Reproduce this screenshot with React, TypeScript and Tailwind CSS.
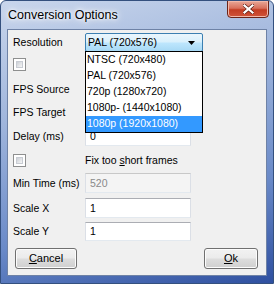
const font = "font-['Liberation_Sans',Arial,sans-serif]"

function Label({ children }: { children: React.ReactNode }) {
  return <div className="w-[72px] shrink-0 text-[10.5px] text-black leading-none">{children}</div>
}

function TextBox({ value, disabled }: { value: string; disabled?: boolean }) {
  return (
    <div
      className={`w-[106px] h-full border border-[#abadb3] border-b-[#e3e9ef] border-x-[#dbdfe6] flex items-center px-[4px] text-[10.5px] leading-none ${
        disabled ? 'bg-[#f4f4f4] text-[#8a8a8a] border-[#c8c8c8]' : 'bg-white text-black'
      }`}
    >
      {value}
    </div>
  )
}

function CheckBox() {
  return (
    <div className="w-[13px] h-[13px] border border-[#8e8f8f] bg-white p-[2px]">
      <div className="w-full h-full bg-[linear-gradient(135deg,#cbcfd5,#f6f6f6)] border border-[#c8ccd3]" />
    </div>
  )
}

function Button({ children, className }: { children: React.ReactNode; className: string }) {
  return (
    <div
      className={`h-[21px] rounded-[3px] border border-[#707070] bg-[linear-gradient(#f2f2f2_0%,#ebebeb_48%,#dddddd_52%,#cfcfcf_100%)] shadow-[inset_0_0_0_1px_#fcfcfc] flex items-center justify-center text-[11px] text-black ${className}`}
    >
      {children}
    </div>
  )
}

const options = ['NTSC (720x480)', 'PAL (720x576)', '720p (1280x720)', '1080p- (1440x1080)', '1080p (1920x1080)']

export default function App() {
  return (
    <div className={`w-[274px] h-[284px] ${font} bg-[linear-gradient(165deg,#c9d6ec_0%,#9fb5dc_35%,#6a8ac8_70%,#2f50a0_100%)] border border-[#34507e] rounded-t-[6px] flex flex-col overflow-hidden`}>
      {/* title bar */}
      <div className="relative h-[28px] shrink-0 flex items-center px-[7px]">
        <span className="text-[12.5px] text-black [text-shadow:0_0_6px_#fff,0_0_10px_#fff,0_0_3px_#fff]">Conversion Options</span>
        <div className="absolute right-[4px] top-[-1px] w-[42px] h-[18px] rounded-b-[4px] border border-[#6b2418] bg-[linear-gradient(#e8a898_0%,#d8705c_45%,#c33c22_55%,#d0543a_100%)] flex items-center justify-center shadow-[inset_0_0_0_1px_#f2b7a8]">
          <svg width="11" height="10" viewBox="0 0 11 10">
            <path d="M1.5 1.5 L9.5 8.5 M9.5 1.5 L1.5 8.5" stroke="#5a1a10" strokeWidth="3.6" strokeLinecap="square" />
            <path d="M1.5 1.5 L9.5 8.5 M9.5 1.5 L1.5 8.5" stroke="#fff" strokeWidth="2.2" strokeLinecap="square" />
          </svg>
        </div>
      </div>

      {/* client */}
      <div className="relative mx-[6px] h-[247px] bg-[#f0f0f0] border border-[#6e82a6] flex flex-col pl-[5px]">
        <div className="relative mt-[3px] h-[19px] flex items-center">
          <Label>Resolution</Label>
          <div className="w-[118px] h-full border border-[#3c7fb1] rounded-[2px] bg-[linear-gradient(#eaf6fd_0%,#d9f0fc_48%,#bee6fd_52%,#a7d9f5_100%)] flex items-center px-[2px] text-[10.5px]">
            <span className="flex-1">PAL (720x576)</span>
            <svg width="7" height="4" viewBox="0 0 7 4" className="mr-[5px]">
              <path d="M0 0 H7 L3.5 4 Z" fill="#000" />
            </svg>
          </div>
          <div className="absolute left-[72px] top-[18px] z-10 w-[118px] border border-[#000] bg-white flex flex-col">
            {options.map((o, i) => (
              <div
                key={o}
                className={`h-[16px] flex items-center px-[1px] text-[10.5px] ${
                  i === options.length - 1 ? 'bg-[#3399ff] text-white' : 'text-black'
                }`}
              >
                {o}
              </div>
            ))}
          </div>
        </div>

        <div className="mt-[5px] h-[15px] flex items-center">
          <CheckBox />
        </div>

        <div className="mt-[7px] h-[20px] flex items-center">
          <Label>FPS Source</Label>
          <TextBox value="" />
        </div>
        <div className="mt-[3px] h-[20px] flex items-center">
          <Label>FPS Target</Label>
          <TextBox value="" />
        </div>
        <div className="mt-[4px] h-[20px] flex items-center">
          <Label>Delay (ms)</Label>
          <TextBox value="0" />
        </div>

        <div className="mt-[8px] h-[13px] flex items-center">
          <div className="w-[72px] shrink-0">
            <CheckBox />
          </div>
          <span className="text-[10.5px] text-black">
            Fix too <span className="underline">s</span>hort frames
          </span>
        </div>

        <div className="mt-[6px] h-[20px] flex items-center">
          <Label>Min Time (ms)</Label>
          <TextBox value="520" disabled />
        </div>
        <div className="mt-[5px] h-[20px] flex items-center">
          <Label>Scale X</Label>
          <TextBox value="1" />
        </div>
        <div className="mt-[4px] h-[19px] flex items-center">
          <Label>Scale Y</Label>
          <TextBox value="1" />
        </div>

        <div className="mt-[7px] flex justify-between pl-[2px] pr-[8px]">
          <Button className="w-[62px]">
            <span className="underline">C</span>ancel
          </Button>
          <Button className="w-[54px]">
            <span className="underline">O</span>k
          </Button>
        </div>
      </div>
    </div>
  )
}
